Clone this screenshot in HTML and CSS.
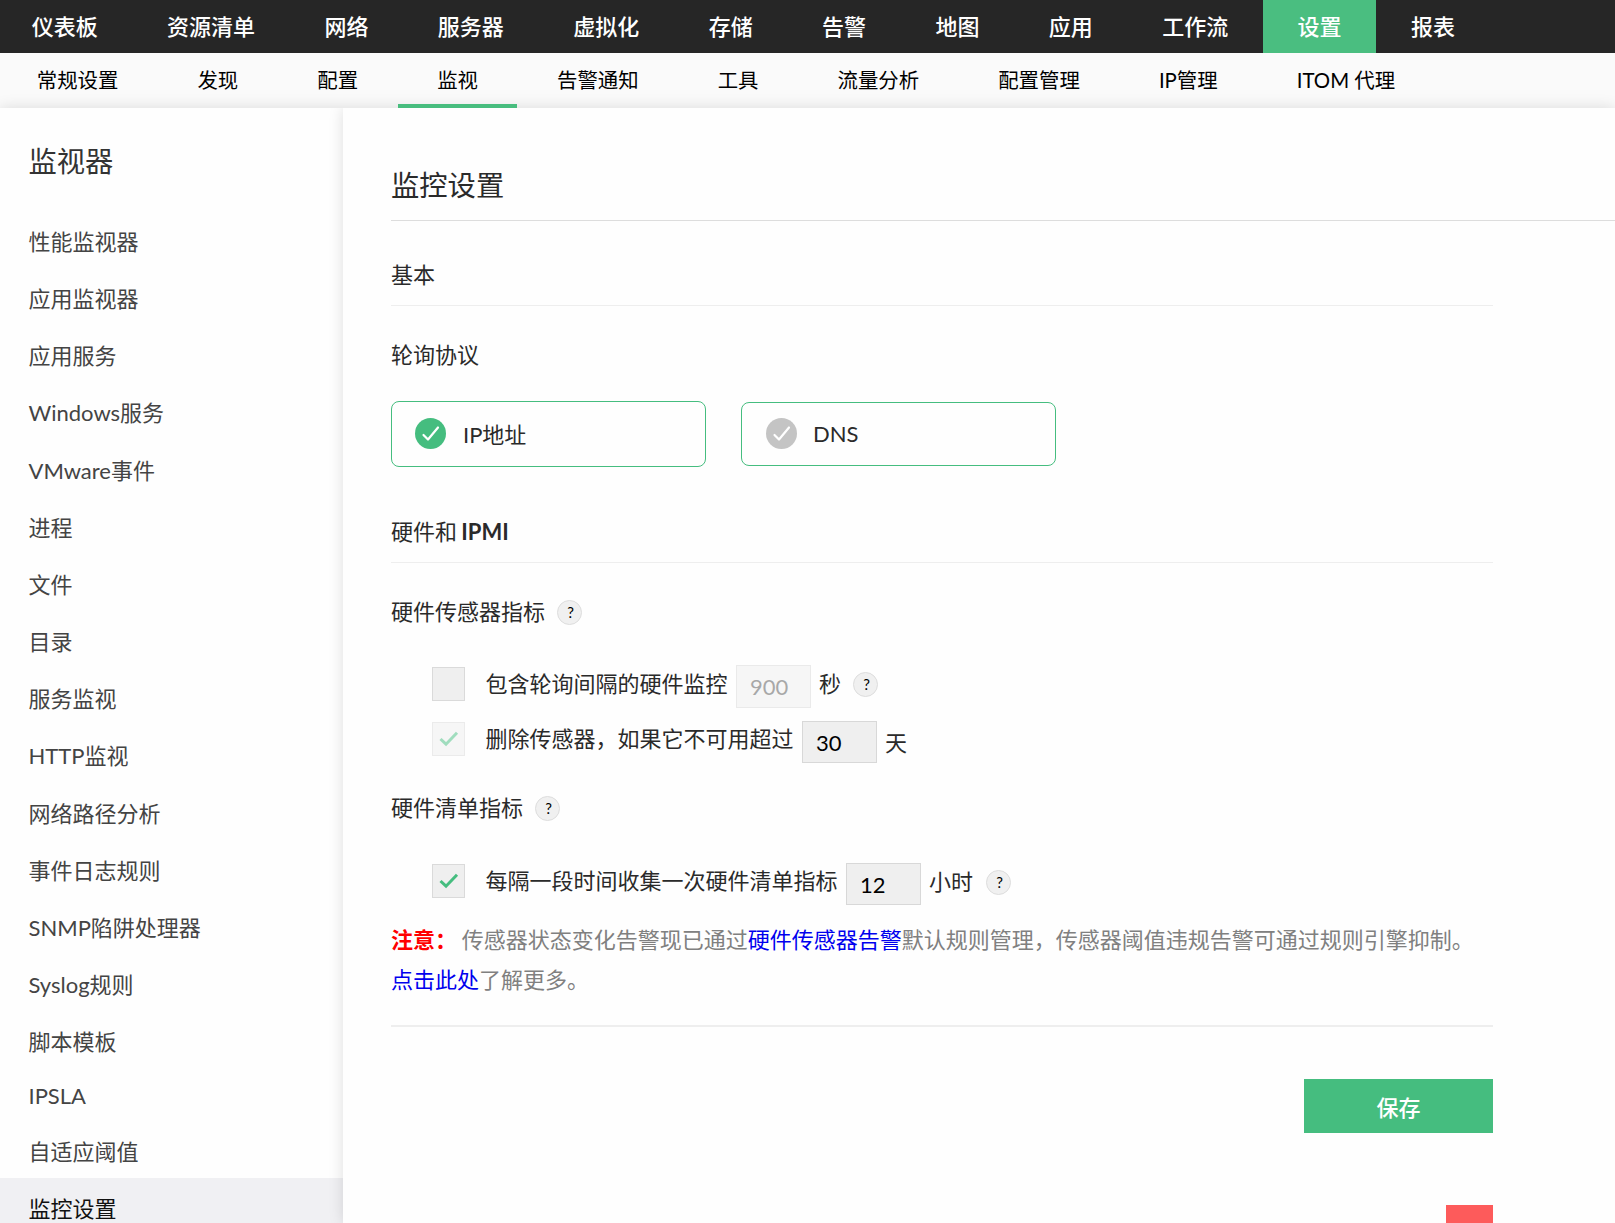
FILE: index.html
```
<!DOCTYPE html>
<html lang="zh-CN">
<head>
    <meta charset="UTF-8">
    <meta name="viewport" content="width=device-width, initial-scale=1.0">
    <title>监控设置</title>
    <link rel="stylesheet" href="styles.css">
</head>
<body>

    <nav class="topnav">
        <a>仪表板</a>
        <a>资源清单</a>
        <a>网络</a>
        <a>服务器</a>
        <a>虚拟化</a>
        <a>存储</a>
        <a>告警</a>
        <a>地图</a>
        <a>应用</a>
        <a>工作流</a>
        <a class="active">设置</a>
        <a>报表</a>
    </nav>

    <nav class="subnav">
        <a>常规设置</a>
        <a>发现</a>
        <a>配置</a>
        <a class="active">监视</a>
        <a>告警通知</a>
        <a>工具</a>
        <a>流量分析</a>
        <a>配置管理</a>
        <a>IP管理</a>
        <a>ITOM 代理</a>
    </nav>

    <div class="layout">
        <aside class="sidebar">
            <h2>监视器</h2>
            <ul>
                <li>性能监视器</li>
                <li>应用监视器</li>
                <li>应用服务</li>
                <li>Windows服务</li>
                <li>VMware事件</li>
                <li>进程</li>
                <li>文件</li>
                <li>目录</li>
                <li>服务监视</li>
                <li>HTTP监视</li>
                <li>网络路径分析</li>
                <li>事件日志规则</li>
                <li>SNMP陷阱处理器</li>
                <li>Syslog规则</li>
                <li>脚本模板</li>
                <li>IPSLA</li>
                <li>自适应阈值</li>
                <li class="active">监控设置</li>
            </ul>
        </aside>

        <main class="main">
            <h1>监控设置</h1>

            <div class="form">
                <h3 class="section-basic">基本</h3>
                <p class="label label-protocol">轮询协议</p>
                <div class="protocols">
                    <div class="protocol selected">
                        <svg width="31" height="31" viewBox="0 0 31 31">
                            <circle cx="15.5" cy="15.5" r="15.5"/>
                            <path d="M8.5 17L13 21.5L23 9.5"/>
                        </svg>
                        <span>IP地址</span>
                    </div>
                    <div class="protocol">
                        <svg width="31" height="31" viewBox="0 0 31 31">
                            <circle cx="15.5" cy="15.5" r="15.5"/>
                            <path d="M8.5 17L13 21.5L23 9.5"/>
                        </svg>
                        <span>DNS</span>
                    </div>
                </div>

                <h3 class="section-hardware">硬件和 <b>IPMI</b></h3>

                <p class="label label-sensor">硬件传感器指标 <span class="help">?</span></p>
                <div class="row row-interval">
                    <span class="checkbox"></span>
                    <span class="text">包含轮询间隔的硬件监控</span>
                    <input type="text" value="900" disabled>
                    <span class="unit">秒</span>
                    <span class="help">?</span>
                </div>
                <div class="row row-delete">
                    <span class="checkbox disabled">
                        <svg width="20" height="16" viewBox="0 0 20 16"><path d="M1.5 8L7 13.2L18 1.8"/></svg>
                    </span>
                    <span class="text">删除传感器，如果它不可用超过</span>
                    <input type="text" value="30">
                    <span class="unit">天</span>
                </div>

                <p class="label label-inventory">硬件清单指标 <span class="help">?</span></p>
                <div class="row row-inventory">
                    <span class="checkbox">
                        <svg width="20" height="16" viewBox="0 0 20 16"><path d="M1.5 8L7 13.2L18 1.8"/></svg>
                    </span>
                    <span class="text">每隔一段时间收集一次硬件清单指标</span>
                    <input type="text" value="12">
                    <span class="unit">小时</span>
                    <span class="help">?</span>
                </div>

                <p class="note"><b>注意：</b> 传感器状态变化告警现已通过<a href="#">硬件传感器告警</a>默认规则管理，传感器阈值违规告警可通过规则引擎抑制。<br><a href="#">点击此处</a>了解更多。</p>

                <div class="actions">
                    <button type="button">保存</button>
                    <div class="feedback"></div>
                </div>
            </div>
        </main>
    </div>

</body>
</html>
```
FILE: styles.css
```
* {
    margin: 0;
    padding: 0;
    box-sizing: border-box;
    font-family: Lato, 'Noto Sans CJK SC', sans-serif;
}
body {
    height: 100vh;
    overflow: hidden;
    background-color: #fff;
    color: #2a2a2a;
    font-size: 22px;
}
/* navigation */
.topnav {
    display: flex;
    height: 53px;
    margin-left: -3px;
    background-color: #262626;
    box-shadow: -3px 0 0 #262626;
}
.topnav a {
    height: 53px;
    padding: 0 34.7px;
    line-height: 54px;
    font-weight: 500;
    color: #fff;
    white-space: nowrap;
}
.topnav .active {
    background-color: #4abe80;
}
.subnav {
    display: flex;
    height: 55px;
    margin-left: -2.8px;
    background-color: #fafafa;
}
.subnav a {
    height: 55px;
    padding: 0 39.55px;
    line-height: 55px;
    font-size: 20.4px;
    color: #000;
    white-space: nowrap;
}
.subnav .active {
    border-bottom: 4px solid #48bd7e;
}
/* page */
.layout {
    display: flex;
    height: calc(100vh - 108px);
    background-color: #fefefe;
    box-shadow: 0 0 14px rgba(0, 0, 0, 0.13);
}
.sidebar {
    width: 343px;
    flex-shrink: 0;
    padding-top: 33px;
    overflow: hidden;
}
.sidebar h2 {
    padding-left: 28.5px;
    line-height: 40px;
    font-size: 28.3px;
    font-weight: 400;
    color: #333;
    margin-bottom: 30.2px;
}
.sidebar ul {
    list-style: none;
}
.sidebar li {
    padding: 12.6px 28.5px;
    color: #444;
}
.sidebar .active {
    background-color: #f0f0f3;
    color: #111;
}
.main {
    flex: 1;
    padding: 57px 0 0 48px;
    background-color: #fefefe;
    box-shadow: 0 0 14px rgba(0, 0, 0, 0.13);
    clip-path: inset(0 0 0 -20px);
}
.main h1 {
    padding-bottom: 15px;
    line-height: 40px;
    font-size: 28.3px;
    font-weight: 400;
    border-bottom: 1px solid #ddd;
}
.form {
    width: 1102px;
}
.form h3 {
    line-height: 40px;
    font-size: 22px;
    font-weight: 400;
    word-spacing: -1.3px;
    border-bottom: 1px solid #eee;
}
.section-basic {
    padding: 34px 0 10px;
}
.section-hardware {
    padding: 45px 0 10px;
}
.label {
    display: flex;
    align-items: center;
    gap: 12px;
    line-height: 40px;
}
.label-protocol {
    margin-top: 29px;
}
.label-sensor {
    margin-top: 29px;
}
.label-inventory {
    margin-top: 25px;
}
.protocols {
    display: flex;
    align-items: center;
    gap: 35px;
    margin-top: 26px;
}
.protocol {
    display: flex;
    align-items: center;
    gap: 16px;
    width: 315px;
    height: 64px;
    padding: 0 0 1px 24px;
    border: 1px solid #45bd7f;
    border-radius: 8px;
}
.protocol.selected {
    height: 66px;
    gap: 17px;
    padding-left: 23px;
}
.protocol.selected span {
    padding-top: 3px;
}
.protocol span {
    line-height: 30px;
}
.protocol circle {
    fill: #c4c4c4;
}
.protocol.selected circle {
    fill: #45bd7f;
}
.protocol path {
    fill: none;
    stroke: #fff;
    stroke-width: 2.2;
    stroke-linecap: round;
    stroke-linejoin: round;
}
.help {
    width: 25px;
    height: 25px;
    padding-left: 2px;
    border: 1px solid #ddd;
    border-radius: 50%;
    background-color: #f0f0f0;
    line-height: 23px;
    font-size: 15px;
    text-align: center;
    color: #000;
}
/* option rows */
.row {
    display: flex;
    align-items: flex-start;
    height: 42px;
    padding-left: 41px;
}
.row-interval {
    height: 43px;
    margin-top: 33px;
}
.row-delete {
    margin-top: 13px;
}
.row-inventory {
    margin-top: 35px;
}
.checkbox {
    display: flex;
    align-items: center;
    justify-content: center;
    width: 33px;
    height: 34px;
    margin-top: 1px;
    border: 1px solid #dadada;
    background-color: #efefef;
}
.row-interval .checkbox {
    margin-top: 2px;
}
.checkbox.disabled {
    opacity: 0.5;
}
.checkbox path {
    fill: none;
    stroke: #45bd7f;
    stroke-width: 3;
}
.row .text {
    margin: 0 8.5px 0 20.5px;
    line-height: 36px;
}
.row-interval .text {
    line-height: 37px;
}
.row input {
    width: 75px;
    height: 42px;
    padding: 0 13px;
    border: 1px solid #d8d8d8;
    background-color: #efefef;
    font-size: 22px;
    color: #000;
}
.row input:disabled {
    height: 43px;
    opacity: 0.5;
    color: #545454;
}
.row .unit {
    margin: 0 12px 0 8px;
    line-height: 38px;
}
.row-delete .unit {
    line-height: 43px;
}
.row-inventory .unit {
    margin-right: 13px;
    line-height: 37px;
}
.row .help {
    margin-top: 7px;
}
.note {
    margin-top: 15px;
    padding-bottom: 25px;
    border-bottom: 2px solid #eee;
    line-height: 40px;
    word-spacing: -1px;
    color: #808080;
    white-space: nowrap;
}
.note b {
    color: #f00;
}
.note a {
    color: #0000ee;
    text-decoration: none;
}
.actions {
    display: flex;
    flex-direction: column;
    align-items: flex-end;
    padding-top: 52px;
}
button {
    width: 189px;
    height: 54px;
    padding-top: 4px;
    border: none;
    background-color: #45bd7f;
    font-size: 22px;
    font-weight: 500;
    line-height: 50px;
    color: #fff;
}
.feedback {
    width: 47px;
    height: 60px;
    margin-top: 72px;
    background-color: #fd5b5b;
}
```
